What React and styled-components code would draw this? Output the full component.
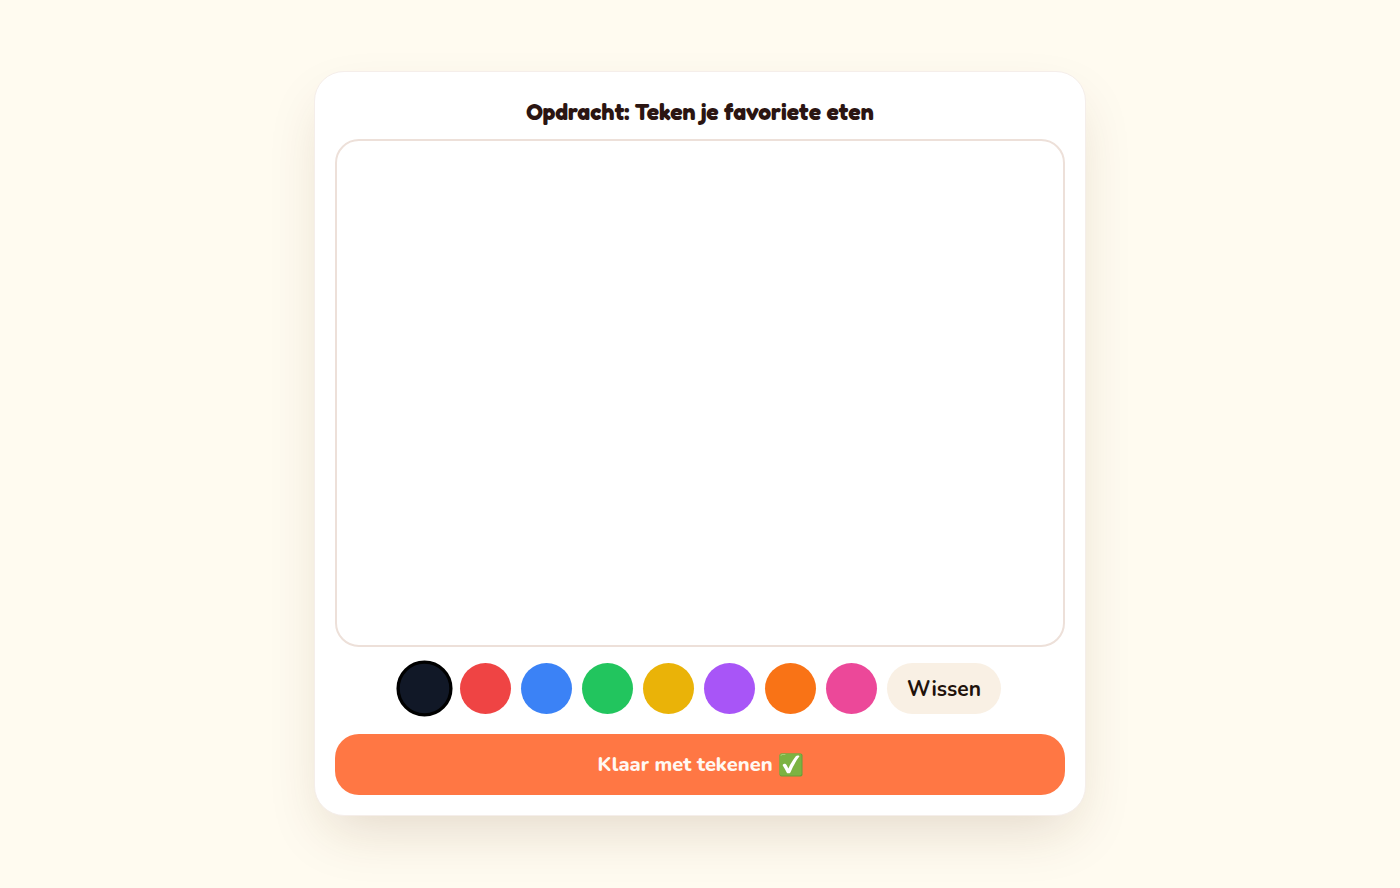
import React, { useState } from "react";
import styled, { createGlobalStyle } from "styled-components";

const GlobalStyle = createGlobalStyle`
  *, *::before, *::after { box-sizing: border-box; }
  body {
    margin: 0;
    background: #fffbf0;
    color: #2b1512;
    font-family: Nunito, "Open Sans", "Noto Sans", sans-serif;
  }
  button { font: inherit; cursor: pointer; }
`;

const Page = styled.main`
  min-height: 100vh;
  display: flex;
  align-items: center;
  justify-content: center;
  padding: 20px 20px 21px;
`;

const Card = styled.section`
  width: 100%;
  max-width: 772px;
  padding: 20px;
  display: flex;
  flex-direction: column;
  background: #fff;
  border: 1px solid #f5eeea;
  border-radius: 30px;
  box-shadow: 0 24px 56px -12px rgba(90, 45, 20, 0.17);
`;

const Title = styled.h1`
  margin: 4px 0 11px;
  font-family: Fredoka, Lato, sans-serif;
  font-size: 23px;
  line-height: 32px;
  font-weight: 700;
  text-align: center;
`;

const DrawingArea = styled.canvas`
  display: block;
  width: 100%;
  height: 508px;
  background: #fff;
  border: 2px solid #ede0d9;
  border-radius: 24px;
  touch-action: none;
`;

const Tools = styled.div`
  display: flex;
  flex-wrap: wrap;
  align-items: center;
  justify-content: center;
  gap: 10px;
  margin: 16px 0 20px;
`;

const Swatch = styled.button`
  width: 51px;
  height: 51px;
  padding: 0;
  border: ${({ $selected }) => ($selected ? "3px solid #000" : "none")};
  border-radius: 50%;
  background: ${({ $color }) => $color};
  transform: ${({ $selected }) => ($selected ? "scale(1.1)" : "none")};
`;

const ClearButton = styled.button`
  height: 51px;
  padding: 0 20px;
  border: none;
  border-radius: 26px;
  background: #f9f0e4;
  color: #21120b;
  && {
    font-size: 21px;
    font-weight: 700;
  }
`;

const DoneButton = styled.button`
  height: 61px;
  display: flex;
  align-items: center;
  justify-content: center;
  gap: 6px;
  border: none;
  border-radius: 24px;
  background: #ff7744;
  color: #fff8f2;
  && {
    font-size: 20px;
    font-weight: 800;
  }
`;

const CheckMark = () => (
  <svg width="24" height="24" viewBox="0 0 24 24" aria-hidden="true">
    <rect x="0.5" y="0.5" width="23" height="23" rx="2" fill="#689f38" />
    <rect x="0.5" y="0.5" width="22" height="22" rx="2" fill="#7cb342" />
    <path d="M2 2.5Q2 1.5 3 1.5H6" fill="none" stroke="#aed581" strokeWidth="0.8" strokeLinecap="round" />
    <path
      d="M4 11.4C5 10.2 6.8 10.6 7.6 12L9.4 15.4C11.5 10.8 14 6.6 16.8 3.2C17.7 2.2 21 2.3 20.3 3.6C16.6 8.5 13.6 14.2 11.4 19.5C11 20.6 8.3 20.7 7.7 19.5C6.5 17 5.3 14.8 3.9 12.7C3.6 12.3 3.7 11.8 4 11.4Z"
      fill="#fff"
    />
  </svg>
);

const COLORS = [
  { name: "Zwart", value: "#111827" },
  { name: "Rood", value: "#ef4444" },
  { name: "Blauw", value: "#3b82f6" },
  { name: "Groen", value: "#22c55e" },
  { name: "Geel", value: "#eab308" },
  { name: "Paars", value: "#a855f7" },
  { name: "Oranje", value: "#f97316" },
  { name: "Roze", value: "#ec4899" },
];

export default function App() {
  const [color, setColor] = useState(COLORS[0].value);

  return (
    <>
      <GlobalStyle />
      <Page>
        <Card>
          <Title>Opdracht: Teken je favoriete eten</Title>
          <DrawingArea aria-label="Tekenvlak" />
          <Tools>
            {COLORS.map(({ name, value }) => (
              <Swatch
                key={value}
                type="button"
                aria-label={name}
                aria-pressed={color === value}
                $color={value}
                $selected={color === value}
                onClick={() => setColor(value)}
              />
            ))}
            <ClearButton type="button">Wissen</ClearButton>
          </Tools>
          <DoneButton type="button">
            Klaar met tekenen
            <CheckMark />
          </DoneButton>
        </Card>
      </Page>
    </>
  );
}
